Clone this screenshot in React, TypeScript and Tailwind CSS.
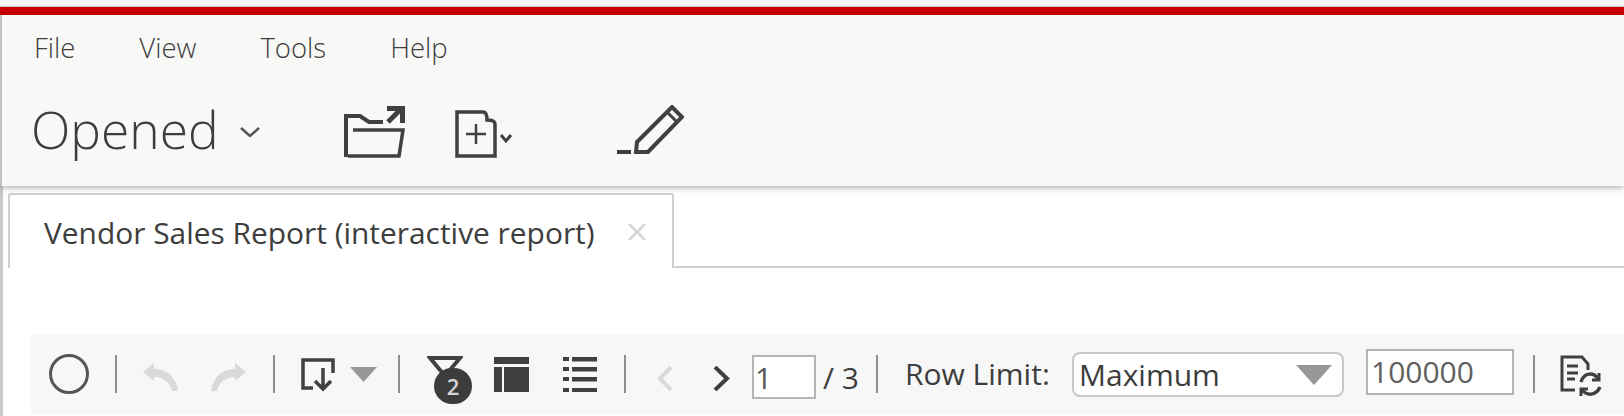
import React from 'react';

const ink = '#404040';

const Sep = () => <div className="w-[2px] h-[38px] mt-[21px] bg-[#8f8f8b]" />;

const FolderIcon = () => (
  <svg width="61" height="53" viewBox="0 0 61 53" fill="none" stroke={ink} strokeWidth="4" className="ml-[84px] mt-[36px]">
    <path d="M2 52V11H16L25 17H39" />
    <path d="M9 25H59L55 51H4" strokeWidth="3.5" />
    <path d="M44 17L57 4" strokeWidth="5" />
    <path d="M43 3.5H58.5V18" strokeWidth="5" />
  </svg>
);

const NewDocIcon = () => (
  <svg width="60" height="48" viewBox="0 0 60 48" fill="none" stroke={ink} className="ml-[50px] mt-[41px]">
    <path d="M2 2H28Q32 2 32 10Q40 10 40 14V46H2Z" strokeWidth="3.5" />
    <path d="M21 14V34M11 24H31" strokeWidth="2.5" />
    <path d="M46 25L51 31L56 25" strokeWidth="3" />
  </svg>
);

const PencilIcon = () => (
  <svg width="67" height="50" viewBox="0 0 67 50" fill="none" stroke={ink} strokeWidth="4" className="ml-[102px] mt-[36px]">
    <path d="M20 37L55 2L65 12L31 47H19Z" />
    <path d="M50 7L60 17" strokeWidth="3" />
    <path d="M0 47H14" />
  </svg>
);

const UndoIcon = ({ flip }: { flip?: boolean }) => (
  <svg width="35" height="28" viewBox="0 0 35 28" fill="#d9d9d9" className={flip ? '-scale-x-100' : ''}>
    <path d="M0 9L11 0V6C24 6 33 14 35 28H29C27 19 20 14 11 14V18Z" />
  </svg>
);

const ExportIcon = () => (
  <svg width="34" height="34" viewBox="0 0 34 34" fill="none" stroke={ink} strokeWidth="3.5">
    <path d="M32 15V2H2V30H12" />
    <path d="M22 10V31" />
    <path d="M14 23L22 31L30 23" />
  </svg>
);

const Triangle = ({ w, h }: { w: number; h: number }) => (
  <svg width={w} height={h} viewBox="0 0 10 10" preserveAspectRatio="none" fill="#979797">
    <path d="M0 0H10L5 10Z" />
  </svg>
);

const FilterBadge = () => (
  <div className="relative w-[45px] h-[48px] mt-[22px] ml-[27px]">
    <svg width="36" height="24" viewBox="0 0 36 24" fill="none" stroke={ink} strokeWidth="4">
      <path d="M3 2H33L18 20Z" />
    </svg>
    <div className="absolute left-[7px] top-[12px] w-[38px] h-[36px] rounded-full bg-[#3c3c3c] text-[#d4d4d4] text-[22px] font-semibold leading-[36px] text-center">
      2
    </div>
  </div>
);

const TableIcon = () => (
  <svg width="35" height="35" viewBox="0 0 35 35" fill={ink}>
    <rect x="0" y="0" width="35" height="7" />
    <rect x="0" y="10" width="8" height="25" />
    <rect x="10" y="10" width="25" height="25" />
  </svg>
);

const ListIcon = () => (
  <svg width="34" height="36" viewBox="0 0 34 36" fill={ink}>
    {[1, 11, 21, 32].map((y) => (
      <g key={y}>
        <rect x="0" y={y} width="6" height="4" />
        <rect x="9" y={y} width="25" height="4.5" />
      </g>
    ))}
  </svg>
);

const ChevronLR = ({ left, color }: { left?: boolean; color: string }) => (
  <svg width="18" height="25" viewBox="0 0 18 25" fill="none" stroke={color} strokeWidth="4">
    <path d={left ? 'M15 1L4 12.5L15 24' : 'M3 1L15 12.5L3 24'} />
  </svg>
);

const RefreshDocIcon = () => (
  <svg width="42" height="42" viewBox="0 0 42 42" fill="none" stroke={ink} strokeWidth="3" className="ml-[25px] mt-[21px]">
    <path d="M15 35H2V2H22L28 9V15" />
    <path d="M7 11H18M7 18H18M7 24H15" />
    <path d="M21 27C24 17 34 17 38 24" strokeWidth="3.5" />
    <path d="M39 18V25H32" strokeWidth="3" />
    <path d="M40 32C36 41 27 41 22 35" strokeWidth="3.5" />
    <path d="M21 41V34H28" strokeWidth="3" />
  </svg>
);

export default function App() {
  return (
    <div className="w-[1624px] h-[416px] overflow-hidden bg-white text-[#3d3d3d] font-['Open_Sans',sans-serif]">
      <div className="h-[7px] bg-[#f8f8f8] border-b border-[#c4c4c4]" />
      <div className="h-[8px] bg-[#cc0000]" />
      <header className="relative h-[171px] bg-[#f8f8f6] border-l-2 border-[#c2c2c2] shadow-[0_2px_6px_rgba(0,0,0,0.3)]">
        <nav className="flex pt-[13px] pl-[32px] h-[54px] text-[27.5px] leading-[40px] font-light">
          <span>File</span>
          <span className="ml-[64px]">View</span>
          <span className="ml-[64px]">Tools</span>
          <span className="ml-[64px]">Help</span>
        </nav>
        <div className="flex items-start">
          <span className="ml-[29px] mt-[24px] w-[209px] text-[51.5px] leading-[72px] font-light whitespace-nowrap">Opened</span>
          <svg width="20" height="10" viewBox="0 0 20 10" fill="none" stroke="#555" strokeWidth="2.5" className="mt-[58px]">
            <path d="M1 1L10 9L19 1" />
          </svg>
          <FolderIcon />
          <NewDocIcon />
          <PencilIcon />
        </div>
      </header>

      <div className="h-[230px] border-l-[3px] border-[#c9c9c9] pt-[7px]">
        <div className="flex h-[75px]">
          <div className="w-[666px] ml-[5px] flex items-start border-2 border-b-0 border-[#cfcfcf] rounded-t-[3px]">
            <span className="ml-[34px] mt-[20px] text-[29.9px] leading-[36px] whitespace-nowrap">Vendor Sales Report (interactive report)</span>
            <svg width="20" height="20" viewBox="0 0 20 20" stroke="#d6d6d6" strokeWidth="2.5" className="ml-[32px] mt-[27px]">
              <path d="M2 2L18 18M18 2L2 18" />
            </svg>
          </div>
          <div className="flex-1 border-b-2 border-[#cfcfcf]" />
        </div>

        <div className="flex items-start h-[80px] ml-[28px] mt-[66px] bg-[#f7f7f7] text-[30px]">
          <div className="ml-[18px] mt-[20px] w-[40px] h-[40px] rounded-full border-[3px] border-[#555]" />
          <div className="ml-[26px]"><Sep /></div>
          <div className="ml-[26px] mt-[29px]"><UndoIcon /></div>
          <div className="ml-[33px] mt-[29px]"><UndoIcon flip /></div>
          <div className="ml-[27px]"><Sep /></div>
          <div className="ml-[26px] mt-[24px]"><ExportIcon /></div>
          <div className="ml-[15px] mt-[33px]"><Triangle w={27} h={15} /></div>
          <div className="ml-[21px]"><Sep /></div>
          <FilterBadge />
          <div className="ml-[22px] mt-[23px]"><TableIcon /></div>
          <div className="ml-[34px] mt-[22px]"><ListIcon /></div>
          <div className="ml-[27px]"><Sep /></div>
          <div className="ml-[30px] mt-[32px]"><ChevronLR left color="#d9d9d9" /></div>
          <div className="ml-[38px] mt-[32px]"><ChevronLR color={ink} /></div>
          <input readOnly value="1" className="ml-[22px] mt-[21px] w-[64px] h-[44px] px-[1px] border-2 border-[#b5b5b5] bg-white text-[30px] text-[#555] outline-none" />
          <span className="ml-[7px] mt-[26px] w-[37px] leading-[36px] whitespace-nowrap">/ 3</span>
          <div className="ml-[16px]"><Sep /></div>
          <span className="ml-[27px] mt-[22px] w-[144px] leading-[36px] whitespace-nowrap">Row Limit:</span>
          <div className="ml-[23px] mt-[18px] w-[272px] h-[45px] flex items-center justify-between pl-[5px] pr-[10px] bg-white border-2 border-[#c8c8c8] rounded-[8px]">
            <span className="leading-[36px]">Maximum</span>
            <Triangle w={36} h={20} />
          </div>
          <input readOnly value="100000" className="ml-[22px] mt-[15px] w-[148px] h-[46px] px-[3px] pb-[2px] border-2 border-[#b5b5b5] bg-white text-[30px] text-[#606060] outline-none" />
          <div className="ml-[19px]"><Sep /></div>
          <RefreshDocIcon />
        </div>
      </div>
    </div>
  );
}
